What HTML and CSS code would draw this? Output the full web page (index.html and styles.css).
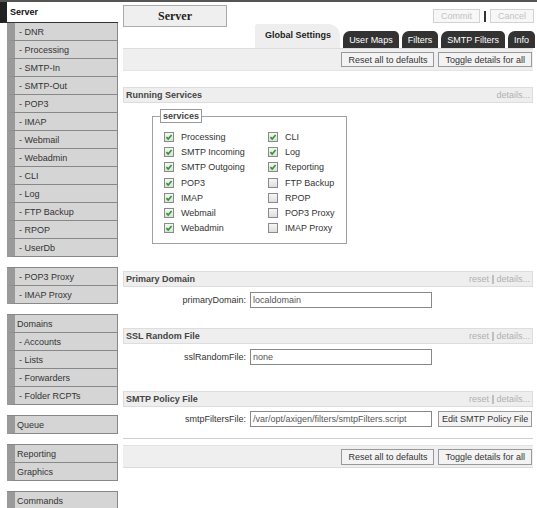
FILE: index.html
```html
<!DOCTYPE html>
<html>
<head>
<meta charset="utf-8">
<link rel="stylesheet" href="styles.css">
</head>
<body>
<div class="page">
  <nav class="side">
    <div class="side-head">Server</div>
    <div class="group">
      <div class="item sub">- DNR</div>
      <div class="item sub">- Processing</div>
      <div class="item sub">- SMTP-In</div>
      <div class="item sub">- SMTP-Out</div>
      <div class="item sub">- POP3</div>
      <div class="item sub">- IMAP</div>
      <div class="item sub">- Webmail</div>
      <div class="item sub">- Webadmin</div>
      <div class="item sub">- CLI</div>
      <div class="item sub">- Log</div>
      <div class="item sub">- FTP Backup</div>
      <div class="item sub">- RPOP</div>
      <div class="item sub">- UserDb</div>
    </div>
    <div class="group">
      <div class="item sub">- POP3 Proxy</div>
      <div class="item sub">- IMAP Proxy</div>
    </div>
    <div class="group">
      <div class="item">Domains</div>
      <div class="item sub">- Accounts</div>
      <div class="item sub">- Lists</div>
      <div class="item sub">- Forwarders</div>
      <div class="item sub">- Folder RCPTs</div>
    </div>
    <div class="group">
      <div class="item">Queue</div>
    </div>
    <div class="group">
      <div class="item">Reporting</div>
      <div class="item">Graphics</div>
    </div>
    <div class="group">
      <div class="item">Commands</div>
    </div>
  </nav>

  <main class="main">
    <div class="topbar">
      <div class="title">Server</div>
      <div class="actions">
        <span class="btn dis">Commit</span>
        <span class="sep"></span>
        <span class="btn dis">Cancel</span>
      </div>
    </div>

    <div class="tabs">
      <div class="tab active">Global Settings</div>
      <div class="tab">User Maps</div>
      <div class="tab">Filters</div>
      <div class="tab">SMTP Filters</div>
      <div class="tab">Info</div>
    </div>

    <div class="bar">
      <span class="btn">Reset all to defaults</span>
      <span class="btn">Toggle details for all</span>
    </div>

    <div class="shead s-run">
      <span>Running Services</span>
      <span class="links">details...</span>
    </div>

    <fieldset class="services">
      <legend>services</legend>
      <div class="grid">
        <div class="cbrow"><span class="cb on"><svg viewBox="0 0 8 8"><path d="M1.4 4.1 L3.2 6 L6.6 1.9"/></svg></span>Processing</div>
        <div class="cbrow"><span class="cb on"><svg viewBox="0 0 8 8"><path d="M1.4 4.1 L3.2 6 L6.6 1.9"/></svg></span>CLI</div>
        <div class="cbrow"><span class="cb on"><svg viewBox="0 0 8 8"><path d="M1.4 4.1 L3.2 6 L6.6 1.9"/></svg></span>SMTP Incoming</div>
        <div class="cbrow"><span class="cb on"><svg viewBox="0 0 8 8"><path d="M1.4 4.1 L3.2 6 L6.6 1.9"/></svg></span>Log</div>
        <div class="cbrow"><span class="cb on"><svg viewBox="0 0 8 8"><path d="M1.4 4.1 L3.2 6 L6.6 1.9"/></svg></span>SMTP Outgoing</div>
        <div class="cbrow"><span class="cb on"><svg viewBox="0 0 8 8"><path d="M1.4 4.1 L3.2 6 L6.6 1.9"/></svg></span>Reporting</div>
        <div class="cbrow"><span class="cb on"><svg viewBox="0 0 8 8"><path d="M1.4 4.1 L3.2 6 L6.6 1.9"/></svg></span>POP3</div>
        <div class="cbrow"><span class="cb"></span>FTP Backup</div>
        <div class="cbrow"><span class="cb on"><svg viewBox="0 0 8 8"><path d="M1.4 4.1 L3.2 6 L6.6 1.9"/></svg></span>IMAP</div>
        <div class="cbrow"><span class="cb"></span>RPOP</div>
        <div class="cbrow"><span class="cb on"><svg viewBox="0 0 8 8"><path d="M1.4 4.1 L3.2 6 L6.6 1.9"/></svg></span>Webmail</div>
        <div class="cbrow"><span class="cb"></span>POP3 Proxy</div>
        <div class="cbrow"><span class="cb on"><svg viewBox="0 0 8 8"><path d="M1.4 4.1 L3.2 6 L6.6 1.9"/></svg></span>Webadmin</div>
        <div class="cbrow"><span class="cb"></span>IMAP Proxy</div>
      </div>
    </fieldset>

    <div class="shead s-primary">
      <span>Primary Domain</span>
      <span class="links">reset <span class="pipe">|</span> details...</span>
    </div>
    <div class="frow">
      <span class="flabel">primaryDomain:</span>
      <span class="input">localdomain</span>
    </div>

    <div class="shead s-ssl">
      <span>SSL Random File</span>
      <span class="links">reset <span class="pipe">|</span> details...</span>
    </div>
    <div class="frow">
      <span class="flabel">sslRandomFile:</span>
      <span class="input">none</span>
    </div>

    <div class="shead s-smtp">
      <span>SMTP Policy File</span>
      <span class="links">reset <span class="pipe">|</span> details...</span>
    </div>
    <div class="frow f-smtp">
      <span class="flabel">smtpFiltersFile:</span>
      <span class="input">/var/opt/axigen/filters/smtpFilters.script</span>
      <span class="btn tall">Edit SMTP Policy File</span>
    </div>

    <div class="rule"></div>

    <div class="bar bottom">
      <span class="btn tall">Reset all to defaults</span>
      <span class="btn tall">Toggle details for all</span>
    </div>
  </main>
</div>
</body>
</html>
```

FILE: styles.css
```css
html, body {
  margin: 0;
  padding: 0;
  background: #fff;
}

body {
  font-family: "Liberation Sans", Arial, sans-serif;
  font-size: 9px;
  color: #333;
}

.page {
  display: flex;
  border-top: 2px solid #555;
  height: 506px;
  overflow: hidden;
}

/* ---------- sidebar ---------- */
.side {
  width: 118px;
  flex: none;
}

.side-head {
  height: 21px;
  box-sizing: border-box;
  border-left: 7px solid #222;
  border-bottom: 1px solid #333;
  padding-left: 3px;
  font-weight: bold;
  color: #111;
  display: flex;
  align-items: center;
}

.group {
  margin-left: 7px;
  border-right: 1px solid #888;
}

.group + .group {
  margin-top: 10px;
  border-top: 1px solid #888;
}

.item {
  height: 18px;
  box-sizing: border-box;
  border-left: 8px solid #9a9a9a;
  border-bottom: 1px solid #888;
  background: #d5d5d5;
  padding-left: 2px;
  display: flex;
  align-items: center;
  white-space: nowrap;
  color: #333;
}

.item.sub {
  padding-left: 4px;
}

/* ---------- main ---------- */
.main {
  flex: 1;
  padding: 0 2px 0 5px;
  min-width: 0;
}

.topbar {
  display: flex;
  justify-content: space-between;
  align-items: flex-start;
  padding-top: 3px;
  height: 21px;
}

.title {
  width: 104px;
  height: 22px;
  box-sizing: border-box;
  border: 1px solid #aaa;
  background: #efefef;
  font-family: "Liberation Serif", "Times New Roman", serif;
  font-weight: bold;
  font-size: 12px;
  color: #222;
  display: flex;
  align-items: center;
  justify-content: center;
}

.actions {
  display: flex;
  align-items: center;
  margin-top: 4px;
  margin-right: 1px;
}

.sep {
  width: 2px;
  height: 11px;
  background: #333;
  margin: 0 4px;
}

.btn {
  height: 15px;
  box-sizing: border-box;
  border: 1px solid #999;
  background: #f3f3f3;
  padding: 0 6px;
  display: inline-flex;
  align-items: center;
  white-space: nowrap;
  color: #333;
}

.btn.dis {
  height: 14px;
  padding: 0 7px;
  color: #c2c2c2;
  border-color: #d2d2d2;
  background: #f7f7f7;
}

.btn.tall {
  height: 16px;
}

.f-smtp .btn {
  padding: 0 3px;
  margin-left: 6px;
}

/* ---------- tabs ---------- */
.tabs {
  height: 25px;
  margin-top: -3px;
  display: flex;
  justify-content: flex-end;
  align-items: flex-end;
  gap: 3px;
}

.tab {
  height: 17px;
  box-sizing: border-box;
  background: #333;
  color: #fff;
  padding: 0 6px;
  border-radius: 7px 5px 0 0;
  display: flex;
  align-items: center;
  white-space: nowrap;
}

.tab.active {
  height: 24px;
  background: #eee;
  color: #222;
  font-weight: bold;
  padding: 6px 9px 0 10px;
  align-items: flex-start;
  border-radius: 3px 12px 0 0;
}

/* ---------- bars ---------- */
.bar {
  height: 23px;
  box-sizing: border-box;
  background: #efefef;
  border-top: 1px solid #ddd;
  border-bottom: 1px solid #e4e4e4;
  margin-right: 2px;
  padding-right: 1px;
  display: flex;
  justify-content: flex-end;
  align-items: center;
  gap: 4px;
}

.bar.bottom {
  margin-top: 6px;
  border-top: 1px solid #e2e2e2;
  border-bottom: 1px solid #dcdcdc;
}

.shead {
  height: 16px;
  box-sizing: border-box;
  background: #eee;
  border: 1px solid #ddd;
  margin-right: 2px;
  padding: 0 2px 0 2px;
  display: flex;
  justify-content: space-between;
  align-items: center;
  font-weight: bold;
  color: #444;
}

.shead .links {
  font-weight: normal;
  color: #b0b0b0;
}

.shead .pipe {
  color: #777;
}

.s-run { margin-top: 16px; }
.s-primary { margin-top: 27px; }
.s-ssl { margin-top: 20px; }
.s-smtp { margin-top: 26px; }

/* ---------- services fieldset ---------- */
.services {
  margin: 6px 0 0 29px;
  width: 195px;
  box-sizing: border-box;
  border: 1px solid #a0a0a0;
  padding: 6px 0 7px 11px;
  min-width: 0;
}

.services legend {
  margin-left: -4px;
  border: 1px solid #999;
  padding: 0 2px;
  line-height: 12px;
  font-weight: bold;
  color: #444;
}

.grid {
  display: grid;
  grid-template-columns: 104px auto;
  grid-auto-rows: 15.3px;
}

.cbrow {
  display: flex;
  align-items: center;
  gap: 7px;
  white-space: nowrap;
  color: #333;
}

.cb {
  width: 10px;
  height: 10px;
  box-sizing: border-box;
  border: 1px solid #8a8a8a;
  background: linear-gradient(#f6f6f6, #dedede);
  display: flex;
  align-items: center;
  justify-content: center;
  flex: none;
}

.cb svg {
  width: 8px;
  height: 8px;
}

.cb svg path {
  fill: none;
  stroke: #2a9a2a;
  stroke-width: 1.6;
}

/* ---------- form rows ---------- */
.frow {
  display: flex;
  align-items: center;
  margin-top: 5px;
}

.f-smtp {
  margin-top: 4px;
}

.flabel {
  width: 127px;
  box-sizing: border-box;
  padding-right: 4px;
  text-align: right;
  color: #333;
  white-space: nowrap;
}

.input {
  width: 182px;
  height: 16px;
  box-sizing: border-box;
  border: 1px solid #888;
  padding: 0 2px;
  color: #555;
  display: flex;
  align-items: center;
  white-space: nowrap;
  overflow: hidden;
}

.rule {
  margin-top: 11px;
  margin-right: 2px;
  height: 1px;
  background: #cfcfcf;
}
```
